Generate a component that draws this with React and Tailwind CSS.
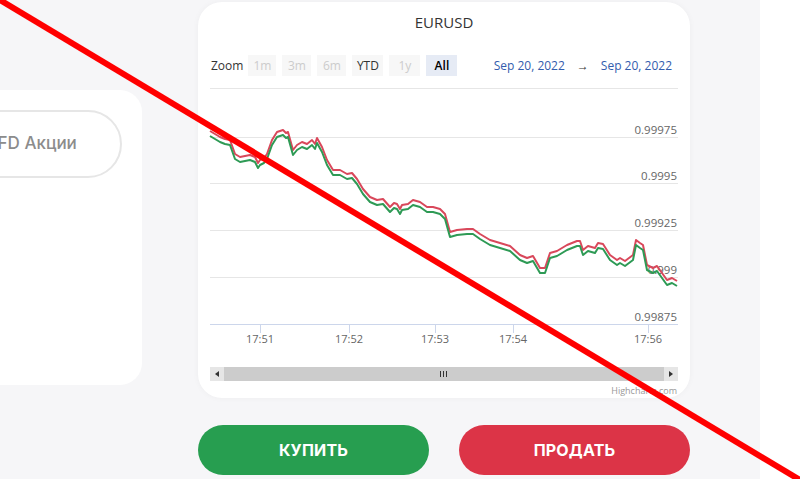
import React from 'react';

const RED = [
  [210,131],[215,134],[220,137],[225,139],[230,140],[235,154],[240,157],[245,156],[250,155],[255,157],[258,163],[260,160],[264,158],[267,154],[272,140],
  [277,132],[283,130],[286,133],[288,132],[293,150],[297,145],[302,142],[307,144],[312,140],[315,144],[317,138],
  [322,147],[327,160],[333,170],[340,170],[347,174],[352,173],[357,179],[363,189],[370,197],[377,200],
  [383,199],[390,207],[394,203],[397,204],[400,209],[402,205],[408,204],[413,200],[420,202],[427,207],[433,207],[440,209],
  [445,214],[450,232],[457,230],[467,229],[473,229],[480,234],[490,240],[500,243],[510,246],[520,255],
  [527,258],[533,256],[540,268],[545,268],[550,253],[557,251],[567,245],[577,241],[580,241],[583,250],
  [588,246],[595,248],[598,243],[603,244],[610,255],[617,260],[620,258],[625,261],[633,255],[636,240],
  [640,243],[643,245],[647,265],[653,268],[657,266],[662,273],[667,280],[672,278],[677,281],
];

const toPath = (pts, dy) => pts.map(([x, y], i) => `${i ? 'L' : 'M'}${x} ${y + dy}`).join(' ');

const grid = [
  { y: 137, label: '0.99975' },
  { y: 183, label: '0.9995' },
  { y: 230, label: '0.99925' },
  { y: 277, label: '0.999' },
];

const ticks = [
  { x: 260, label: '17:51' },
  { x: 349, label: '17:52' },
  { x: 435, label: '17:53' },
  { x: 513, label: '17:54' },
  { x: 648, label: '17:56' },
];

const zoomBtns = [
  { t: '1m', w: 'w-[28px]', c: 'text-[#cccccc]' },
  { t: '3m', w: 'w-[29px]', c: 'text-[#cccccc]' },
  { t: '6m', w: 'w-[29px]', c: 'text-[#cccccc]' },
  { t: 'YTD', w: 'w-[31px]', c: 'text-[#333333]' },
  { t: '1y', w: 'w-[31px]', c: 'text-[#cccccc]' },
];

const Chart = () => (
  <svg width="492" height="310" viewBox="198 88 492 310" className="block">
    <line x1="210" y1="88.5" x2="678" y2="88.5" stroke="#e6e6e6" />
    {grid.map(g => (
      <g key={g.label}>
        <line x1="210" y1={g.y + 0.5} x2="678" y2={g.y + 0.5} stroke="#e6e6e6" />
        <text x="677" y={g.y - 3} textAnchor="end" fontSize="11.5" fill="#666666" fontFamily="'Open Sans', sans-serif">{g.label}</text>
      </g>
    ))}
    <text x="677" y="321" textAnchor="end" fontSize="11.5" fill="#666666" fontFamily="'Open Sans', sans-serif">0.99875</text>
    <line x1="210" y1="324.5" x2="678" y2="324.5" stroke="#ccd6eb" />
    {ticks.map(t => (
      <g key={t.label}>
        <line x1={t.x + 0.5} y1="324" x2={t.x + 0.5} y2="333" stroke="#ccd6eb" />
        <text x={t.x} y="343" textAnchor="middle" fontSize="11" fill="#666666" fontFamily="'Open Sans', sans-serif">{t.label}</text>
      </g>
    ))}
    <path d={toPath(RED, 0)} fill="none" stroke="#d9485b" strokeWidth="2" strokeLinejoin="round" />
    <path d={toPath(RED, 5)} fill="none" stroke="#2e9a55" strokeWidth="2" strokeLinejoin="round" />
    <rect x="210" y="367" width="468" height="14" fill="#cccccc" />
    <rect x="210" y="367" width="14" height="14" fill="#e6e6e6" />
    <rect x="664" y="367" width="14" height="14" fill="#e6e6e6" />
    <path d="M215 374 L219 371 L219 377 Z" fill="#333333" />
    <path d="M673 374 L669 371 L669 377 Z" fill="#333333" />
    <g stroke="#333333" strokeWidth="1">
      <line x1="440.5" y1="371" x2="440.5" y2="377" />
      <line x1="443.5" y1="371" x2="443.5" y2="377" />
      <line x1="446.5" y1="371" x2="446.5" y2="377" />
    </g>
    <text x="677" y="394" textAnchor="end" fontSize="9" fill="#999999" fontFamily="'Open Sans', sans-serif">Highcharts.com</text>
  </svg>
);

export default function App() {
  return (
    <div className="relative w-[800px] h-[479px] bg-white overflow-hidden flex" style={{ fontFamily: "'Open Sans', sans-serif" }}>
      <div className="w-[760px] h-full bg-[#f6f6f8] flex">
        <div className="w-[198px] pt-[90px] shrink-0">
          <div className="w-[142px] h-[295px] bg-white rounded-r-[22px] pt-[20px] overflow-hidden">
            <div className="ml-[-60px] w-[182px] h-[68px] rounded-full border-2 border-[#e6e6e6] flex items-center justify-center">
              <span className="text-[17px] font-medium text-[#8c8c8c]" style={{ fontFamily: "Inter, sans-serif" }}>CFD Акции</span>
            </div>
          </div>
        </div>
        <div className="w-[492px] pt-[2px] shrink-0 flex flex-col">
          <div className="h-[396px] bg-white rounded-[24px] shadow-[0_0_6px_rgba(0,0,0,0.04)] overflow-hidden">
            <div className="pt-[10px] h-[30px] text-center text-[15px] leading-[20px] text-[#333333]">EURUSD</div>
            <div className="mt-[23px] h-[21px] flex items-center pl-[13px] text-[12px]">
              <span className="text-[#333333] mr-[5px]">Zoom</span>
              <div className="flex gap-[6px]">
                {zoomBtns.map(b => (
                  <span key={b.t} className={`${b.w} h-[21px] bg-[#f7f7f7] flex items-center justify-center ${b.c}`}>{b.t}</span>
                ))}
                <span className="w-[31px] h-[21px] bg-[#e6ebf5] flex items-center justify-center text-black font-semibold">All</span>
              </div>
              <div className="ml-auto mr-[18px] flex items-center text-[#335cad] text-[12px]">
                <span>Sep 20, 2022</span>
                <span className="mx-[12px] text-[#333333]">→</span>
                <span>Sep 20, 2022</span>
              </div>
            </div>
            <div className="mt-[12px]">
              <Chart />
            </div>
          </div>
          <div className="mt-[27px] flex gap-[30px]">
            <button className="w-[232px] h-[50px] rounded-full bg-[#279e50] text-white text-[16px] font-bold tracking-[0.2px]" style={{ fontFamily: "Inter, sans-serif" }}>КУПИТЬ</button>
            <button className="w-[232px] h-[50px] rounded-full bg-[#dc3447] text-white text-[16px] font-bold tracking-[0.2px]" style={{ fontFamily: "Inter, sans-serif" }}>ПРОДАТЬ</button>
          </div>
        </div>
      </div>
      <svg className="absolute inset-0 pointer-events-none" width="800" height="479" viewBox="0 0 800 479">
        <line x1="0" y1="0" x2="800" y2="480" stroke="#ff0000" strokeWidth="6" />
      </svg>
    </div>
  );
}
